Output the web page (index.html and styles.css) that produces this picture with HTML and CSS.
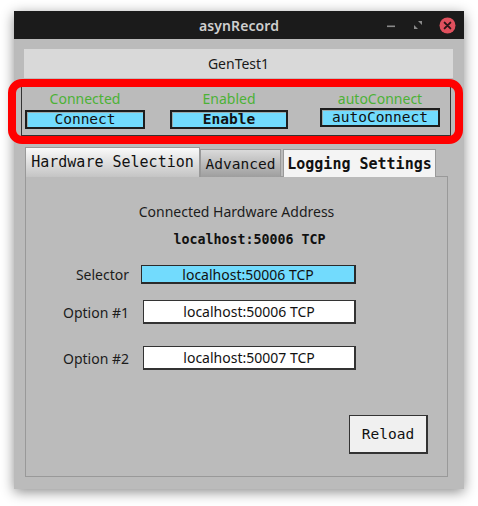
FILE: index.html
```html
<!DOCTYPE html>
<html>
<head>
<meta charset="utf-8">
<link rel="stylesheet" href="styles.css">
</head>
<body>
<div class="window">
  <div class="titlebar">
    <div class="title">asynRecord</div>
    <div class="wm-buttons">
      <svg class="wm-min" width="12" height="12" viewBox="0 0 12 12"><rect x="2" y="5.5" width="8" height="1.6" fill="#8a8a8a"/></svg>
      <svg class="wm-max" width="12" height="12" viewBox="0 0 12 12"><path d="M6 2 H10 V6 Z" fill="#8a8a8a"/><path d="M2 6 V10 H6 Z" fill="#8a8a8a"/></svg>
      <svg class="wm-close" width="17" height="17" viewBox="0 0 17 17"><circle cx="8.5" cy="8.5" r="8" fill="#e0505d"/><path d="M5.6 5.6 L11.4 11.4 M11.4 5.6 L5.6 11.4" stroke="#2a1416" stroke-width="1.9" stroke-linecap="round"/></svg>
    </div>
  </div>
  <div class="content">
    <div class="header">GenTest1</div>
    <div class="group">
      <div class="ctl c1">
        <div class="state">Connected</div>
        <div class="btn w120">Connect</div>
      </div>
      <div class="ctl c2">
        <div class="state">Enabled</div>
        <div class="btn w118 bold">Enable</div>
      </div>
      <div class="ctl c3">
        <div class="state">autoConnect</div>
        <div class="btn w120">autoConnect</div>
      </div>
      <div class="highlight"></div>
    </div>
    <div class="tabs">
      <div class="tab active">Hardware Selection</div>
      <div class="tab dark">Advanced</div>
      <div class="tab light bold">Logging Settings</div>
    </div>
    <div class="pane">
      <div class="caption">Connected Hardware Address</div>
      <div class="address">localhost:50006 TCP</div>
      <div class="row r-sel">
        <div class="lbl">Selector</div>
        <div class="field sel">localhost:50006 TCP</div>
      </div>
      <div class="row r-opt1">
        <div class="lbl">Option #1</div>
        <div class="field opt">localhost:50006 TCP</div>
      </div>
      <div class="row r-opt2">
        <div class="lbl">Option #2</div>
        <div class="field opt">localhost:50007 TCP</div>
      </div>
      <div class="reload-row">
        <div class="reload">Reload</div>
      </div>
    </div>
  </div>
</div>
</body>
</html>
```
FILE: styles.css
```css
html, body {
  margin: 0;
  padding: 0;
  background: #ffffff;
}
body {
  width: 478px;
  height: 506px;
  overflow: hidden;
  font-family: "Noto Sans", "DejaVu Sans", sans-serif;
}
.window {
  position: relative;
  margin: 11px 0 0 14px;
  width: 450px;
  height: 478px;
  background: #bbbbbb;
  box-shadow: 0 3px 12px rgba(0,0,0,0.45);
  display: flex;
  flex-direction: column;
}
.titlebar {
  position: relative;
  height: 28px;
  background: #1b1b1b;
  display: flex;
  align-items: center;
  justify-content: center;
}
.title {
  color: #cfcfcf;
  font-size: 14px;
  font-weight: 600;
  letter-spacing: 0.1px;
}
.wm-buttons {
  position: absolute;
  right: 8px;
  top: 5px;
  display: flex;
  align-items: center;
  gap: 15px;
  height: 18px;
}
.wm-min { margin-top: 1px; }
.content {
  flex: 1;
  display: flex;
  flex-direction: column;
}
.header {
  margin: 10px 11px 0 10px;
  height: 29px;
  background: #d9d9d9;
  color: #1a1a1a;
  font-size: 14px;
  display: flex;
  align-items: center;
  justify-content: center;
}
.group {
  position: relative;
  margin: 8px 13px 0 7px;
  height: 45px;
  border: 1px solid #333;
  display: flex;
  align-items: flex-start;
  padding-left: 3px;
  padding-top: 3px;
}
.ctl {
  display: flex;
  flex-direction: column;
  align-items: center;
}
.c2 { margin-left: 25px; }
.c3 { margin-left: 32px; }
.state {
  color: #4cb236;
  font-size: 14px;
  line-height: 17px;
  height: 17px;
  margin-bottom: 3px;
}
.c3 .state { margin-bottom: 1px; }
.btn {
  box-sizing: border-box;
  height: 19px;
  background: #72dbfd;
  border: 2px solid #1d1d1d;
  box-shadow: inset 1px 1px 0 #9aa;
  font-family: "DejaVu Sans Mono", monospace;
  font-size: 14.5px;
  line-height: 15px;
  color: #111;
  text-align: center;
}
.w120 { width: 120px; }
.w118 { width: 118px; }
.bold { font-weight: bold; }
.highlight {
  position: absolute;
  left: -14px;
  right: -13px;
  top: -8px;
  bottom: -9px;
  border: 8px solid #ff0000;
  border-radius: 14px;
  pointer-events: none;
}
.tabs {
  margin: 11px 0 0 11px;
  display: flex;
  align-items: flex-end;
  height: 30px;
  position: relative;
  z-index: 1;
}
.tab {
  box-sizing: border-box;
  border: 1px solid #999;
  border-bottom: none;
  font-family: "DejaVu Sans Mono", monospace;
  font-size: 15px;
  color: #111;
  display: flex;
  align-items: center;
  justify-content: center;
}
.tab.active {
  width: 175px;
  height: 30px;
  background: linear-gradient(#fafafa, #c4c4c4);
  padding-bottom: 2px;
}
.tab.dark {
  width: 81px;
  height: 28px;
  background: linear-gradient(#dadada, #9e9e9e);
  font-size: 14.5px;
}
.tab.light {
  width: 153px;
  height: 28px;
  margin-left: 2px;
  background: #f4f4f4;
}
.pane {
  box-sizing: border-box;
  margin: -1px 16px 0 11px;
  height: 301px;
  border: 1px solid #999;
  display: flex;
  flex-direction: column;
}
.caption {
  margin-top: 25px;
  text-align: center;
  font-size: 14px;
  line-height: 20px;
  color: #1c1c1c;
}
.address {
  margin-top: 8px;
  padding-left: 26px;
  text-align: center;
  font-family: "DejaVu Sans Mono", monospace;
  font-weight: bold;
  font-size: 13.3px;
  line-height: 20px;
  color: #111;
}
.row {
  display: flex;
  align-items: center;
}
.r-sel { margin-top: 15px; }
.r-opt1 { margin-top: 16px; }
.r-opt2 { margin-top: 22px; }
.lbl {
  width: 103px;
  text-align: right;
  font-size: 14px;
  color: #1c1c1c;
}
.field {
  box-sizing: border-box;
  font-size: 14px;
  color: #111;
  display: flex;
  align-items: center;
  justify-content: center;
}
.sel {
  margin-left: 12px;
  width: 215px;
  height: 19px;
  background: #72dbfd;
  border: 2px solid #2a2a2a;
  border-top-width: 1px;
  border-left-width: 1px;
}
.opt {
  margin-left: 14px;
  width: 213px;
  height: 24px;
  background: #ffffff;
  border: 1px solid #333;
  border-right-width: 2px;
  border-bottom-width: 2px;
}
.reload-row {
  margin-top: 45px;
  display: flex;
  justify-content: flex-end;
  padding-right: 19px;
}
.reload {
  box-sizing: border-box;
  width: 79px;
  height: 39px;
  background: #f0f0f0;
  border: 1px solid #333;
  border-right-width: 2px;
  border-bottom-width: 2px;
  font-family: "DejaVu Sans Mono", monospace;
  font-size: 14.5px;
  color: #111;
  display: flex;
  align-items: center;
  justify-content: center;
}
```
